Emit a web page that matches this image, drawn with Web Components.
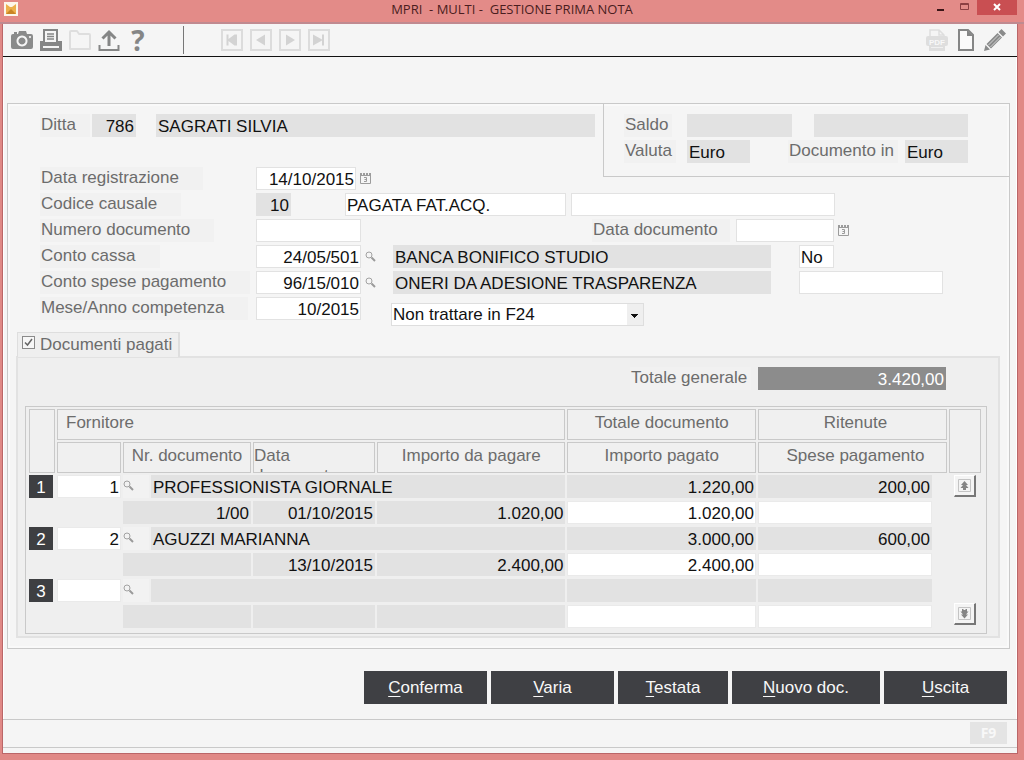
<!DOCTYPE html>
<html lang="it">
<head>
<meta charset="utf-8">
<meta name="viewport" content="width=device-width, initial-scale=1">
<title>MPRI - MULTI - GESTIONE PRIMA NOTA</title>
<style>
  html, body { margin: 0; }
  body {
    font: 17px/21px "Liberation Sans", Arial, sans-serif;
    color: #111;
    background: #f5f5f5;
    --label: #6c6c6c;
    --rule: #c9c9c9;
    --muted: #e2e2e2;
  }
</style>
</head>
<body>
<pn-window heading="MPRI  - MULTI -  GESTIONE PRIMA NOTA">
  <pn-toolbar slot="toolbar"></pn-toolbar>
  <pn-form></pn-form>
  <pn-actions></pn-actions>
  <pn-status slot="status" key="F9"></pn-status>
</pn-window>

<script>
const ICONS = {
  camera: '<svg width="22" height="22" viewBox="0 0 22 22"><path fill="#8a8b8b" fill-rule="evenodd" d="M2 5h1V3h3v2h1l1-3h7l1 3h4q2 0 2 2v11q0 2-2 2H2q-2 0-2-2V7q0-2 2-2zM11 6.500a5.500 5.500 0 1 0 .01 0zM11 8.500a3.500 3.500 0 1 1-.01 0zM19 7a1 1 0 1 0 .01 0z"/></svg>',
  printer: '<svg width="22" height="22" viewBox="0 0 22 22"><path fill="#858686" fill-rule="evenodd" d="M3 0h15v12h4v10H0V12h3zM5 2v11h11V2zM3 17v2h16v-2z"/><path stroke="#858686" stroke-width="1.500" d="M7 5h7M7 7.500h7M7 10h7"/></svg>',
  folder: '<svg width="22" height="22" viewBox="0 0 22 22"><path fill="none" stroke="#dedede" stroke-width="2" stroke-linejoin="round" d="M1 20V3q0-1 1-1h6l2 3h10q1 0 1 1v14z"/></svg>',
  upload: '<svg width="22" height="22" viewBox="0 0 22 22"><path fill="none" stroke="#858686" stroke-width="3" d="M11 17V3M4.500 9.500 11 3l6.500 6.500"/><path fill="none" stroke="#858686" stroke-width="2" d="M1.500 16v5h19v-5"/></svg>',
  first: '<svg width="22" height="22" viewBox="0 0 22 22"><path fill="none" stroke="#dcdcdc" stroke-width="2" d="M1 1h20v20H1z"/><path fill="#d3d3d3" d="M5.500 5.500h2v4.500l6-4.500h2.500v11h-2.500l-6-4.500v4.500h-2z"/></svg>',
  prev: '<svg width="22" height="22" viewBox="0 0 22 22"><path fill="none" stroke="#dcdcdc" stroke-width="2" d="M1 1h20v20H1z"/><path fill="#d3d3d3" d="M15 5.500v11L6 11z"/></svg>',
  next: '<svg width="22" height="22" viewBox="0 0 22 22"><path fill="none" stroke="#dcdcdc" stroke-width="2" d="M1 1h20v20H1z"/><path fill="#d3d3d3" d="M7 5.500v11l9-5.500z"/></svg>',
  last: '<svg width="22" height="22" viewBox="0 0 22 22"><path fill="none" stroke="#dcdcdc" stroke-width="2" d="M1 1h20v20H1z"/><path fill="#d3d3d3" d="M5 5.500 14 10.500V5.500h2v11h-2v-5L5 16.500z"/></svg>',
  pdf: '<svg width="22" height="22" viewBox="0 0 22 22"><path fill="#f5f5f5" stroke="#dedede" stroke-width="1.500" d="M4 8V1h9l5 5v2M13 1v5h5"/><rect y="7" width="22" height="10" rx="2" fill="#dedede"/><path fill="#dedede" d="M3 16h16v6H3z"/><path stroke="#f0f0f0" d="M5 18.500h12"/><text x="11" y="15.500" text-anchor="middle" font-family="Liberation Sans,sans-serif" font-size="8" font-weight="bold" fill="#f8f8f8">PDF</text></svg>',
  page: '<svg width="22" height="22" viewBox="0 0 22 22"><path fill="#fafafa" stroke="#858686" stroke-width="2" d="M4 1h9l5 5v15H4z"/><path fill="#858686" d="M12 1v6h6z"/></svg>',
  pencil: '<svg width="22" height="22" viewBox="0 0 22 22"><path fill="#8a8b8b" d="m17.500 0 4.500 4.500-3 3L14.500 3zM13.500 4l4.500 4.500L7 19.500 2.500 15zM1.500 16 6 20.500 0 22z"/><path stroke="#d4d4d4" d="M14.500 6 4.500 16M16.500 8l-10 10"/></svg>',
  calendar: '<svg width="11" height="11" viewBox="0 0 11 11"><path fill="none" stroke="#9c9c9c" d="M.5 2.500v8h10v-8M0 2.500h11"/><path stroke="#9c9c9c" stroke-width="2" stroke-dasharray="2 1" d="M0 1h11"/><path fill="none" stroke="#9c9c9c" d="M4 4.500h2.500v4H4M4.500 6.500h2"/></svg>',
  search: '<svg width="11" height="11" viewBox="0 0 11 11"><circle cx="4" cy="4" r="3" fill="none" stroke="#a2a2a2"/><path stroke="#9a9a9a" stroke-width="2" d="m6.500 6.500 3.500 3.500"/></svg>',
  up: '<svg width="13" height="13" viewBox="0 0 13 13"><path fill="#f4f4f4" stroke="#c4c4c4" d="M.5.5h12v12H.5z"/><path fill="#858585" d="m6.500 2 3.500 4H8l2.500 3H8v2H5V9H2.500L5 6H3z"/></svg>',
  down: '<svg width="13" height="13" viewBox="0 0 13 13"><path fill="#f4f4f4" stroke="#c4c4c4" d="M.5.5h12v12H.5z"/><path fill="#858585" d="m6.500 11.500-3.500-4h2L2.500 4.500H4V2h1.500v1h2V2H9v2.500h1.500L8 7.500h2z"/></svg>'
};

class Base extends HTMLElement {
  connectedCallback() {
    if (this.shadowRoot) return;
    this.attachShadow({ mode: 'open' }).innerHTML =
      '<style>*{box-sizing:border-box}button,input,select{font:inherit;color:inherit;margin:0}' + this.css() + '</style>' + this.html();
  }
  attr(name, fallback = '') { return this.getAttribute(name) ?? fallback; }
}

customElements.define('pn-icon', class extends Base {
  css() { return `
    :host { display: inline-flex; flex: none; }
    button { display: flex; padding: 0; border: 0; background: none; }`; }
  html() { return `<button type="button" aria-label="${this.attr('title')}">${ICONS[this.attr('name')]}</button>`; }
});

customElements.define('pn-window', class extends Base {
  css() { return `
    :host { display: flex; flex-direction: column; box-sizing: border-box; min-height: 100vh; background: #f5f5f5;
      border: solid #e08986; border-width: 0 7px 7px 3px; }
    header { position: relative; display: flex; height: 24px; margin: 0 -7px 0 -3px; padding: 0 7px 0 3px;
      background: #e38b88; border-bottom: 2px solid #c08a90; color: #4a1d20; }
    header > svg { margin: 2px 1px; }
    h1 { position: absolute; inset: 0; margin: 0; text-align: center; white-space: pre;
      font: 13px/19px "Open Sans", "Noto Sans", sans-serif; pointer-events: none; }
    nav { display: flex; margin-left: auto; height: 15px; }
    nav button { display: flex; align-items: center; justify-content: center; width: 24px; padding: 0; border: 0; background: none; }
    nav .close { width: 40px; background: #c94f52; }
    main { display: flex; flex-direction: column; flex: 1; padding: 46px 6px 14px 3px;
      border-right: 1px solid #fff; border-left: 1px solid #fff; }
    .frame { display: flex; flex-direction: column; flex: 1; box-shadow: 0 0 0 1px #bb6668; }`; }
  html() { return `
    <header>
      <svg width="14" height="14" viewBox="0 0 14 14"><path fill="#fdf6ea" d="M0 0h14v14H0z"/><path fill="#edb04c" d="m2 2 4 3h2l4-3v10H2z"/><path fill="#c98525" d="m2 12 5-5 5 5z"/></svg>
      <h1>${this.attr('heading')}</h1>
      <nav>
        <button type="button" aria-label="Riduci"><svg width="8" height="11"><path fill="#3a1517" d="M0 7h7v2H0z"/></svg></button>
        <button type="button" aria-label="Ingrandisci"><svg width="10" height="11"><path fill="none" stroke="#8c3f42" d="M.5 1.500h8v6h-8zM.5 2.500h8"/></svg></button>
        <button type="button" class="close" aria-label="Chiudi"><svg width="8" height="11"><path fill="none" stroke="#fff" stroke-width="2" d="m1 2 6 6M7 2 1 8"/></svg></button>
      </nav>
    </header>
    <div class="frame">
      <slot name="toolbar"></slot>
      <main><slot></slot></main>
      <slot name="status"></slot>
    </div>`; }
});

customElements.define('pn-toolbar', class extends Base {
  css() { return `
    :host { display: flex; align-items: center; gap: 7px; box-sizing: border-box; height: 33px; padding: 0 11px 0 8px; border-bottom: 1px solid #111; }
    .help { width: 22px; padding: 0; border: 0; background: none; color: #858686; font: bold 28px/28px "Open Sans", sans-serif; }
    hr { width: 1px; height: 28px; margin: 0 30px 0 27px; border: 0; background: #777; }
    .space { flex: 1; }`; }
  html() { return `
    <pn-icon name="camera" title="Cattura"></pn-icon>
    <pn-icon name="printer" title="Stampa"></pn-icon>
    <pn-icon name="folder" title="Apri"></pn-icon>
    <pn-icon name="upload" title="Esporta"></pn-icon>
    <button class="help" type="button">?</button>
    <hr>
    <pn-icon name="first" title="Primo"></pn-icon>
    <pn-icon name="prev" title="Precedente"></pn-icon>
    <pn-icon name="next" title="Successivo"></pn-icon>
    <pn-icon name="last" title="Ultimo"></pn-icon>
    <span class="space"></span>
    <pn-icon name="pdf" title="Crea documento"></pn-icon>
    <pn-icon name="page" title="Nuovo"></pn-icon>
    <pn-icon name="pencil" title="Modifica"></pn-icon>`; }
});

/* Text box with an optional label in front and an optional icon button behind. */
customElements.define('pn-field', class extends Base {
  css() { return `
    :host { display: flex; min-width: 0; }
    .cap { flex: 0 0 var(--lw, auto); }
    label { display: inline-block; height: 23px; padding: 0 var(--lp, 24px) 0 1px; background: #f1f1f1; color: var(--label); white-space: nowrap; }
    input { flex: 0 1 var(--w, 105px); width: 0; min-width: 0; height: 23px; padding: 2px 1px 0; outline: 0;
      border: 1px solid #e2e2e2; border-radius: 0; background: #fff; text-align: left; }
    :host([grow]) input { flex: 1; }
    :host([right]) input { text-align: right; }
    input[readonly] { background: var(--muted); }
    :host([total]) input { background: #8c8c8c; border-color: #8c8c8c; color: #fff; }
    pn-icon { align-self: center; margin-left: 4px; }`; }
  html() {
    const label = this.attr('label'), icon = this.attr('icon');
    return (label ? `<span class="cap"><label for="f">${label}</label></span>` : '') +
      `<input id="f" value="${this.attr('value')}" ${label ? '' : `aria-label="${this.attr('name')}"`} ${this.hasAttribute('ro') ? 'readonly' : ''}>` +
      (icon ? `<pn-icon name="${icon}" title="${icon === 'search' ? 'Cerca' : 'Calendario'}"></pn-icon>` : '');
  }
});

customElements.define('pn-form', class extends Base {
  css() { return `
    :host { display: block; border: 1px solid var(--rule); box-shadow: inset 0 0 0 2px #f9f9f9; padding-bottom: 10px; }
    .top { display: flex; align-items: flex-start; }
    .left { flex: 1; min-width: 0; padding: 10px 0 3px 32px; }
    .firm { display: flex; gap: 20px; padding-right: 8px; margin-bottom: 30px; }
    .firm pn-field:last-child { flex: 1; }
    .side { flex: 0 0 406px; padding: 10px 41px 13px 20px; border: solid var(--rule); border-width: 0 0 1px 1px; --lp: 4px; }
    .side div { display: flex; justify-content: space-between; }
    .side div + div { margin-top: 3px; }
    .rows { display: grid; gap: 3px; padding-left: 32px; }
    .row { display: flex; }
    .rows, .left { --lw: 216px; }
    select { width: 253px; height: 23px; margin: 6px 0 0 30px; padding: 0 20px 0 1px; border: 1px solid #dedede; border-radius: 0; outline: 0; appearance: none;
      background: linear-gradient(#111, #111) no-repeat right 5px top 10px / 7px 1px,
        linear-gradient(#111, #111) no-repeat right 6px top 11px / 5px 1px,
        linear-gradient(#111, #111) no-repeat right 7px top 12px / 3px 1px,
        linear-gradient(#111, #111) no-repeat right 8px top 13px / 1px 1px,
        linear-gradient(#efefef, #efefef) no-repeat right / 16px 100%, #fff; }
    pn-documents { margin: 6px 9px 0 8px; }`; }
  html() { return `
    <div class="top">
      <div class="left">
        <div class="firm">
          <pn-field label="Ditta" value="786" ro right style="--lw:52px;--lp:14px;--w:44px"></pn-field>
          <pn-field name="Ragione sociale" value="SAGRATI SILVIA" ro grow></pn-field>
        </div>
        <pn-field label="Data registrazione" value="14/10/2015" right icon="calendar" style="--w:100px"></pn-field>
      </div>
      <div class="side">
        <div>
          <pn-field label="Saldo" ro style="--lw:63px;--w:105px"></pn-field>
          <pn-field name="Saldo in valuta" ro style="--w:154px"></pn-field>
        </div>
        <div>
          <pn-field label="Valuta" value="Euro" ro style="--lw:63px;--w:63px"></pn-field>
          <pn-field label="Documento in" value="Euro" ro style="--lw:117px;--w:63px"></pn-field>
        </div>
      </div>
    </div>
    <div class="rows">
      <div class="row">
        <pn-field label="Codice causale" value="10" ro right style="--w:35px"></pn-field>
        <pn-field name="Descrizione causale" value="PAGATA FAT.ACQ." style="--w:221px;margin-left:54px"></pn-field>
        <pn-field name="Descrizione aggiuntiva" style="--w:264px;margin-left:5px"></pn-field>
      </div>
      <div class="row">
        <pn-field label="Numero documento"></pn-field>
        <pn-field label="Data documento" icon="calendar" style="--lw:144px;--lp:12px;--w:98px;margin-left:231px"></pn-field>
      </div>
      <div class="row">
        <pn-field label="Conto cassa" value="24/05/501" right icon="search"></pn-field>
        <pn-field name="Descrizione conto cassa" value="BANCA BONIFICO STUDIO" ro style="--w:378px;margin-left:17px"></pn-field>
        <pn-field name="Opzione" value="No" style="--w:35px;margin-left:28px"></pn-field>
      </div>
      <div class="row">
        <pn-field label="Conto spese pagamento" value="96/15/010" right icon="search"></pn-field>
        <pn-field name="Descrizione conto spese" value="ONERI DA ADESIONE TRASPARENZA" ro style="--w:378px;margin-left:17px"></pn-field>
        <pn-field name="Importo spese" style="--w:144px;margin-left:28px"></pn-field>
      </div>
      <div class="row">
        <pn-field label="Mese/Anno competenza" value="10/2015" right></pn-field>
        <select aria-label="Trattamento F24"><option>Non trattare in F24</option></select>
      </div>
    </div>
    <pn-documents></pn-documents>`; }
  /* Fields are flex items of their rows: each one is as wide as its label, box and icon. */
  connectedCallback() {
    super.connectedCallback();
    const px = (el, name, d) => parseInt(el.style.getPropertyValue(name)) || d;
    for (const f of this.shadowRoot.querySelectorAll('pn-field:not([grow])')) {
      const lw = f.hasAttribute('label') ? px(f, '--lw', 216) : 0;
      f.style.flex = `0 1 ${lw + px(f, '--w', 105) + (f.hasAttribute('icon') ? 15 : 0)}px`;
    }
  }
});

customElements.define('pn-documents', class extends Base {
  css() { return `
    :host { display: block; }
    .tab { position: relative; display: inline-flex; gap: 5px; height: 25px; margin-left: 1px; padding: 1px 6px 0 4px; vertical-align: top;
      border: solid #dedede; border-width: 1px 2px 0 1px; background: #efefef; color: var(--label); }
    .tab label { line-height: 22px; }
    .tab input { appearance: none; width: 13px; height: 13px; margin: 2px 0 0; border: 1px solid #8a8a8a; background: #f7f7f7; }
    .tab svg { display: none; position: absolute; left: 6px; top: 5px; pointer-events: none; }
    .tab input:checked ~ svg { display: block; }
    section { margin-top: -1px; padding: 9px 11px 2px 7px; border: 2px solid #e2e2e2; background: #efefef; }
    .total { display: flex; justify-content: flex-end; margin: 0 41px 16px 0; --lw: 128px; --lp: 4px; --w: 188px; }`; }
  html() { return `
    <div class="tab">
      <input type="checkbox" id="c" checked><label for="c">Documenti pagati</label>
      <svg width="9" height="9" viewBox="0 0 9 9"><path fill="none" stroke="#666" stroke-width="1.500" d="M1 4.500 3.500 7 8 1"/></svg>
    </div>
    <section>
      <div class="total"><pn-field label="Totale generale" value="3.420,00" right total style="width:316px"></pn-field></div>
      <pn-table></pn-table>
    </section>`; }
});

customElements.define('pn-table', class extends Base {
  css() { return `
    :host { display: block; border: 1px solid var(--rule); padding: 0 3px 2px 1px; }
    table { width: 100%; table-layout: fixed; border-spacing: 2px; }
    th { height: 31px; padding: 0; border: 1px solid var(--rule); background: #f0f0f0; color: var(--label);
      font-weight: normal; vertical-align: top; line-height: 26px; overflow: hidden; }
    th.start { text-align: left; padding-left: 8px; }
    th.wide { padding-left: 6px; }
    th div { height: 29px; padding-top: 3px; overflow: hidden; line-height: 20px; text-align: left; }
    td { height: 24px; padding: 0; vertical-align: top; }
    .v { height: 23px; padding: 2px 2px 0; background: var(--muted); text-align: right; white-space: nowrap; overflow: hidden; }
    .v.name { text-align: left; }
    input { display: block; width: 100%; height: 23px; padding: 2px 1px 0; border: 1px solid #eaeaea; outline: 0; background: #fff; text-align: right; }
    .n { width: 24px; height: 23px; padding-top: 2px; background: #3e3f42; color: #fff; text-align: center; }
    .find { background: #f2f2f2; }
    pn-icon { display: flex; padding: 5px 0 7px; }
    .scroll { height: 150px; display: flex; flex-direction: column; justify-content: space-between; align-items: center; }
    .scroll button { display: flex; padding: 3px; background: #f4f4f4; border: solid; border-width: 1px 2px 2px 1px; border-color: #fff #777 #777 #fff; }`; }
  html() {
    const rows = [
      ['1', 'PROFESSIONISTA GIORNALE', '1.220,00', '200,00', '1/00', '01/10/2015', '1.020,00', '1.020,00'],
      ['2', 'AGUZZI MARIANNA', '3.000,00', '600,00', '', '13/10/2015', '2.400,00', '2.400,00'],
      ['', '', '', '', '', '', '', '']
    ];
    const v = (t, c = '') => `<div class="v ${c}">${t}</div>`;
    const body = rows.map((r, i) => `
      <tr><td><div class="n">${i + 1}</div></td>
        <td><input aria-label="Fornitore ${i + 1}" value="${r[0]}"></td>
        <td><div class="find"><pn-icon name="search" title="Cerca"></pn-icon></div></td>
        <td colspan="3">${v(r[1], 'name')}</td><td>${v(r[2])}</td><td>${v(r[3])}</td><td></td>
        ${i ? '' : `<td rowspan="6"><div class="scroll"><button type="button" aria-label="Su">${ICONS.up}</button><button type="button" aria-label="Giù">${ICONS.down}</button></div></td>`}</tr>
      <tr><td></td><td></td><td colspan="2">${v(r[4])}</td><td>${v(r[5])}</td><td>${v(r[6])}</td>
        <td><input aria-label="Importo pagato ${i + 1}" value="${r[7]}"></td>
        <td><input aria-label="Spese pagamento ${i + 1}"></td><td></td></tr>`).join('');
    return `<table>
      <colgroup><col style="width:26px"><col style="width:64px"><col style="width:26px"><col style="width:100px"><col style="width:122px"><col><col><col style="width:174px"><col style="width:13px"><col style="width:32px"></colgroup>
      <thead>
        <tr><th rowspan="2"></th><th colspan="5" class="start">Fornitore</th><th>Totale documento</th><th colspan="2" class="wide">Ritenute</th><th rowspan="2"></th></tr>
        <tr><th></th><th colspan="2">Nr. documento</th><th><div>Data documento</div></th><th>Importo da pagare</th><th>Importo pagato</th><th colspan="2" class="wide">Spese pagamento</th></tr>
      </thead>
      <tbody>${body}</tbody></table>`;
  }
});

customElements.define('pn-actions', class extends Base {
  css() { return `
    :host { display: flex; flex-wrap: wrap; justify-content: flex-end; gap: 4px; margin: 22px 3px 0 0; }
    button { width: 123px; height: 33px; padding: 0; border: 0; background: #3f4044; color: #f8f8f8; }
    .small { width: 110px; }
    .large { width: 148px; }
    u { text-underline-offset: 3px; text-decoration-thickness: 1px; }`; }
  html() { return `
    <button type="button"><u>C</u>onferma</button>
    <button type="button"><u>V</u>aria</button>
    <button type="button" class="small"><u>T</u>estata</button>
    <button type="button" class="large"><u>N</u>uovo doc.</button>
    <button type="button"><u>U</u>scita</button>`; }
});

customElements.define('pn-status', class extends Base {
  css() { return `
    :host { display: block; padding-bottom: 5px; }
    footer { display: flex; justify-content: flex-end; height: 29px; padding: 2px 10px 0 0; border: solid var(--rule); border-width: 1px 0; }
    button { width: 37px; height: 22px; padding: 0; border: 0; background: #e4e4e4; color: #f8f8f8; font: bold 14px/22px "Open Sans", sans-serif; }`; }
  html() { return `<footer><button type="button">${this.attr('key')}</button></footer>`; }
});
</script>
</body>
</html>
